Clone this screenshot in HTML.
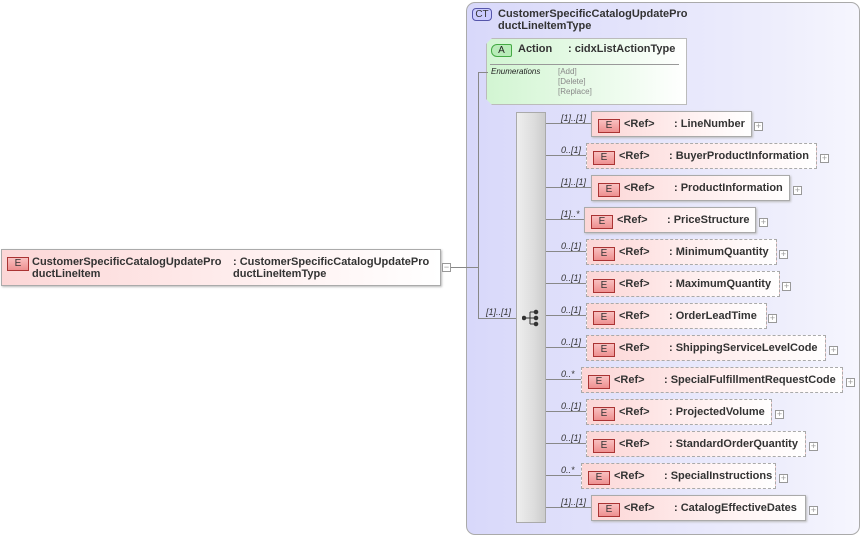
<!DOCTYPE html>
<html><head><meta charset="utf-8"><style>
*{margin:0;padding:0;box-sizing:border-box}
body{width:863px;height:538px;background:#fff;position:relative;overflow:hidden;font-family:"Liberation Sans",sans-serif;font-size:11px;color:#222}
.a{position:absolute}
.ct{left:466px;top:2px;width:394px;height:533px;border:1px solid #aaa;border-radius:9px;background:linear-gradient(90deg,#d8d8fa,#eeeefc 80%,#f6f6fe)}
.el{position:absolute;height:26px;background:linear-gradient(90deg,#fcd6d6,#fff4f4 70%,#fff);border:1px solid #aaa;box-shadow:1px 1px 2px #bbb}
.el.d{border:1px dashed #aaa;box-shadow:none}
.ei{position:absolute;left:6px;top:7px;width:22px;height:14px;border:1px solid #a33;background:linear-gradient(#f9c0c0,#ee9090);font-size:10px;text-align:center;line-height:12px;color:#333}
.rf{position:absolute;left:32px;top:6px;font-weight:bold;color:#333}
.nm{position:absolute;left:82px;top:6px;font-weight:bold;color:#333;white-space:nowrap}
.pl{position:absolute;width:9px;height:9px;border:1px solid #999;background:#fff;font-size:9px;line-height:7px;text-align:center;color:#999;margin-top:2px}
.m{position:absolute;font-size:9px;font-style:italic;color:#333}
.h{position:absolute;height:1px;background:#888}
.v{position:absolute;width:1px;background:#888}
</style></head><body>
<div class="a ct"></div>
<div class="a" style="left:472px;top:8px;width:20px;height:13px;border:1px solid #55a;border-radius:4px;background:#ccf;font-size:10px;text-align:center;line-height:11px;color:#333">CT</div>
<div class="a" style="left:498px;top:8px;font-weight:bold;line-height:12px;color:#333">CustomerSpecificCatalogUpdatePro<br>ductLineItemType</div>
<div class="a" style="left:486px;top:38px;width:201px;height:67px;background:linear-gradient(90deg,#d2f5d2,#f0fcf0 70%,#fff);border:1px solid #bbb;clip-path:polygon(6px 0,100% 0,100% 100%,6px 100%,0 calc(100% - 6px),0 6px);box-shadow:1px 1px 2px #bbb"></div>
<div class="a" style="left:491px;top:44px;width:21px;height:13px;border:1px solid #4a4;border-radius:6px 2px 2px 6px;background:#b8ecb8;font-size:10px;text-align:center;line-height:11px">A</div>
<div class="a" style="left:518px;top:43px;font-weight:bold;color:#333">Action</div>
<div class="a" style="left:568px;top:43px;font-weight:bold;color:#333">: cidxListActionType</div>
<div class="h" style="left:490px;top:64px;width:189px;background:#999"></div>
<div class="a" style="left:491px;top:67px;font-size:8px;font-style:italic;color:#222">Enumerations</div>
<div class="a" style="left:558px;top:67px;font-size:8px;line-height:10px;color:#888">[Add]<br>[Delete]<br>[Replace]</div>
<div class="el" style="left:1px;top:249px;width:440px;height:37px"></div>
<div class="ei" style="left:7px;top:257px">E</div>
<div class="a" style="left:32px;top:256px;font-weight:bold;line-height:12px;color:#333">CustomerSpecificCatalogUpdatePro<br>ductLineItem</div>
<div class="a" style="left:233px;top:256px;font-weight:bold;line-height:12px;color:#333">: CustomerSpecificCatalogUpdatePro<br>ductLineItemType</div>
<div class="pl" style="left:442px;top:261px">−</div>
<div class="h" style="left:451px;top:267px;width:27px"></div>
<div class="v" style="left:478px;top:72px;height:246px"></div>
<div class="h" style="left:478px;top:72px;width:10px"></div>
<div class="h" style="left:478px;top:318px;width:38px"></div>
<div class="m" style="left:486px;top:307px">[1]..[1]</div>
<div class="a" style="left:516px;top:112px;width:30px;height:411px;border:1px solid #aaa;background:linear-gradient(90deg,#eee,#ddd 60%,#ccc)"></div>
<svg class="a" style="left:522px;top:309px" width="20" height="18"><g stroke="#333" fill="#333"><line x1="2" y1="9" x2="8" y2="9"/><line x1="8" y1="3" x2="8" y2="15"/><line x1="8" y1="3" x2="14" y2="3"/><line x1="8" y1="9" x2="14" y2="9"/><line x1="8" y1="15" x2="14" y2="15"/><circle cx="2" cy="9" r="1.8"/><circle cx="14" cy="3" r="1.8"/><circle cx="14" cy="9" r="1.8"/><circle cx="14" cy="15" r="1.8"/></g></svg>

<div class="h" style="left:546px;top:123px;width:45px"></div><div class="m" style="left:561px;top:113px">[1]..[1]</div>
<div class="el" style="left:591px;top:111px;width:161px"><div class="ei">E</div><div class="rf">&lt;Ref&gt;</div><div class="nm">: LineNumber</div></div><div class="pl" style="left:754px;top:120px">+</div>

<div class="h" style="left:546px;top:155px;width:40px"></div><div class="m" style="left:561px;top:145px">0..[1]</div>
<div class="el d" style="left:586px;top:143px;width:231px"><div class="ei">E</div><div class="rf">&lt;Ref&gt;</div><div class="nm">: BuyerProductInformation</div></div><div class="pl" style="left:820px;top:152px">+</div>

<div class="h" style="left:546px;top:187px;width:45px"></div><div class="m" style="left:561px;top:177px">[1]..[1]</div>
<div class="el" style="left:591px;top:175px;width:199px"><div class="ei">E</div><div class="rf">&lt;Ref&gt;</div><div class="nm">: ProductInformation</div></div><div class="pl" style="left:793px;top:184px">+</div>

<div class="h" style="left:546px;top:219px;width:38px"></div><div class="m" style="left:561px;top:209px">[1]..*</div>
<div class="el" style="left:584px;top:207px;width:172px"><div class="ei">E</div><div class="rf">&lt;Ref&gt;</div><div class="nm">: PriceStructure</div></div><div class="pl" style="left:759px;top:216px">+</div>

<div class="h" style="left:546px;top:251px;width:40px"></div><div class="m" style="left:561px;top:241px">0..[1]</div>
<div class="el d" style="left:586px;top:239px;width:191px"><div class="ei">E</div><div class="rf">&lt;Ref&gt;</div><div class="nm">: MinimumQuantity</div></div><div class="pl" style="left:779px;top:248px">+</div>

<div class="h" style="left:546px;top:283px;width:40px"></div><div class="m" style="left:561px;top:273px">0..[1]</div>
<div class="el d" style="left:586px;top:271px;width:194px"><div class="ei">E</div><div class="rf">&lt;Ref&gt;</div><div class="nm">: MaximumQuantity</div></div><div class="pl" style="left:782px;top:280px">+</div>

<div class="h" style="left:546px;top:315px;width:40px"></div><div class="m" style="left:561px;top:305px">0..[1]</div>
<div class="el d" style="left:586px;top:303px;width:181px"><div class="ei">E</div><div class="rf">&lt;Ref&gt;</div><div class="nm">: OrderLeadTime</div></div><div class="pl" style="left:768px;top:312px">+</div>

<div class="h" style="left:546px;top:347px;width:40px"></div><div class="m" style="left:561px;top:337px">0..[1]</div>
<div class="el d" style="left:586px;top:335px;width:240px"><div class="ei">E</div><div class="rf">&lt;Ref&gt;</div><div class="nm">: ShippingServiceLevelCode</div></div><div class="pl" style="left:829px;top:344px">+</div>

<div class="h" style="left:546px;top:379px;width:35px"></div><div class="m" style="left:561px;top:369px">0..*</div>
<div class="el d" style="left:581px;top:367px;width:262px"><div class="ei">E</div><div class="rf">&lt;Ref&gt;</div><div class="nm">: SpecialFulfillmentRequestCode</div></div><div class="pl" style="left:846px;top:376px">+</div>

<div class="h" style="left:546px;top:411px;width:40px"></div><div class="m" style="left:561px;top:401px">0..[1]</div>
<div class="el d" style="left:586px;top:399px;width:186px"><div class="ei">E</div><div class="rf">&lt;Ref&gt;</div><div class="nm">: ProjectedVolume</div></div><div class="pl" style="left:775px;top:408px">+</div>

<div class="h" style="left:546px;top:443px;width:40px"></div><div class="m" style="left:561px;top:433px">0..[1]</div>
<div class="el d" style="left:586px;top:431px;width:220px"><div class="ei">E</div><div class="rf">&lt;Ref&gt;</div><div class="nm">: StandardOrderQuantity</div></div><div class="pl" style="left:809px;top:440px">+</div>

<div class="h" style="left:546px;top:475px;width:35px"></div><div class="m" style="left:561px;top:465px">0..*</div>
<div class="el d" style="left:581px;top:463px;width:195px"><div class="ei">E</div><div class="rf">&lt;Ref&gt;</div><div class="nm">: SpecialInstructions</div></div><div class="pl" style="left:779px;top:472px">+</div>

<div class="h" style="left:546px;top:507px;width:45px"></div><div class="m" style="left:561px;top:497px">[1]..[1]</div>
<div class="el" style="left:591px;top:495px;width:215px"><div class="ei">E</div><div class="rf">&lt;Ref&gt;</div><div class="nm">: CatalogEffectiveDates</div></div><div class="pl" style="left:809px;top:504px">+</div>
</body></html>
